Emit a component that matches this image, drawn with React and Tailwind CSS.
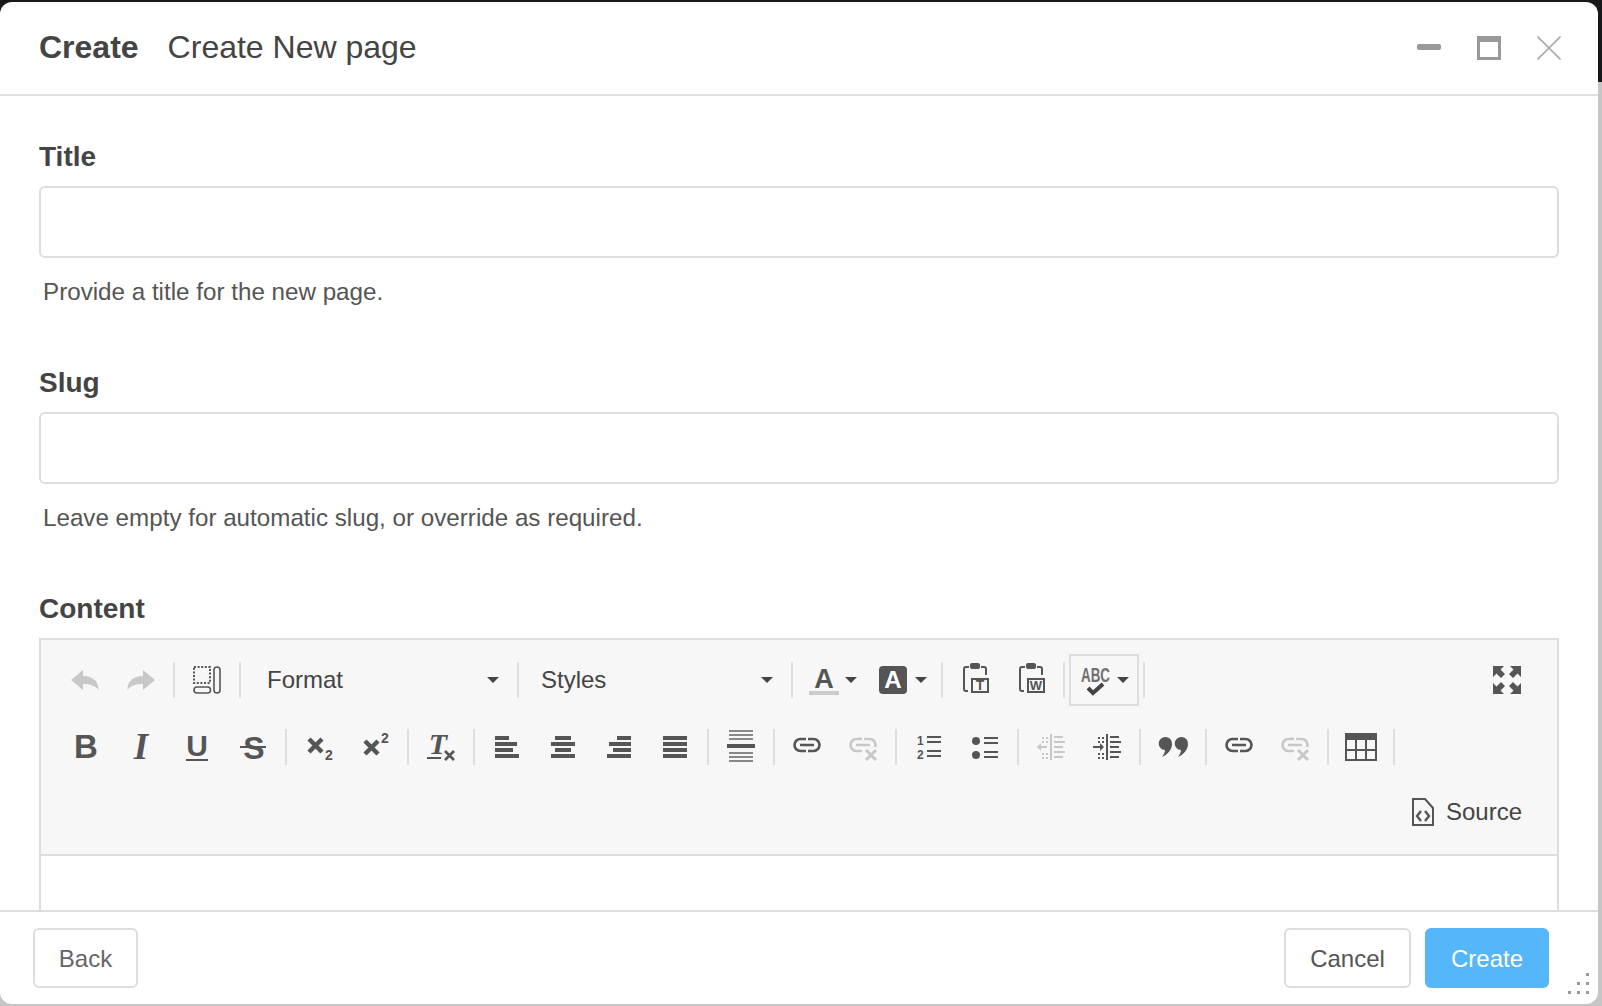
import React from "react";

const DARK = "#555555";
const LIGHT = "#c8c8c8";
const BAR_BG = "#f7f7f7";

function Caret() {
  return (
    <svg width="12" height="6" viewBox="0 0 12 6" className="shrink-0">
      <path d="M0 0H12L6 6Z" fill="#444444" />
    </svg>
  );
}

function Icon({ w = 28, h = 28, children }) {
  return (
    <svg width={w} height={h} viewBox={`0 0 ${w} ${h}`} className="block shrink-0 overflow-visible">
      {children}
    </svg>
  );
}

// toolbar pieces
function Btn({ children }) {
  return <span className="w-[56px] h-[52px] flex items-center justify-center shrink-0">{children}</span>;
}

function Sep() {
  return <span className="w-[2px] h-[36px] bg-[#dedede] mx-[4px] shrink-0" />;
}

function Combo({ label, width, pad }) {
  return (
    <span className={`${width} ${pad} h-[52px] pr-[14px] flex items-center justify-between shrink-0 text-[24px] text-[#444444]`}>
      {label}
      <Caret />
    </span>
  );
}

const Undo = ({ flip }) => (
  <Icon>
    <g transform={flip ? "translate(28 0) scale(-1 1)" : undefined}>
      <path d="M0 14L12 4V10C22 10 28 16 27.5 24C24 19 18 18 12 18V24Z" fill={LIGHT} />
    </g>
  </Icon>
);

const ShowBlocks = () => (
  <Icon>
    <rect x="1" y="1" width="16" height="16" fill="none" stroke={DARK} strokeWidth="2" strokeDasharray="2 1.6" />
    <rect x="1" y="21" width="16.5" height="6" rx="3" fill="none" stroke={DARK} strokeWidth="1.6" />
    <rect x="21" y="1" width="6" height="26" rx="3" fill="none" stroke={DARK} strokeWidth="1.6" />
  </Icon>
);

const FontColor = () => (
  <Icon w={30} h={30}>
    <text x="15" y="23" textAnchor="middle" fontSize="27" fontWeight="700" fill={DARK}>A</text>
    <rect x="0" y="26" width="30" height="4" fill="#cccccc" />
  </Icon>
);

const BgColor = () => (
  <Icon>
    <rect width="28" height="28" rx="4" fill={DARK} />
    <text x="14" y="22" textAnchor="middle" fontSize="24" fontWeight="700" fill="#ffffff">A</text>
  </Icon>
);

const Clip = ({ letter, size = 14 }) => (
  <span className="translate-x-px -translate-y-[2px]">
    <Icon w={26} h={30}>
      <path d="M6 4H3Q1 4 1 6V26Q1 28 3 28H5M18 4H21Q23 4 23 6V12" fill="none" stroke={DARK} strokeWidth="2" />
      <rect x="7" y="0" width="10" height="6" rx="2" fill={DARK} />
      <rect x="9" y="16" width="16" height="13" fill={BAR_BG} stroke={DARK} strokeWidth="2" />
      <text x="17" y="27" textAnchor="middle" fontSize={size} fontWeight="700" fill={DARK}>{letter}</text>
    </Icon>
  </span>
);

const Abc = () => (
  <Icon w={29} h={30}>
    <text x="0" y="17" fontSize="20" fontWeight="700" textLength="29" lengthAdjust="spacingAndGlyphs" fill="#707070">ABC</text>
    <path d="M7 23L12 28L22 19" fill="none" stroke="#444444" strokeWidth="4" />
  </Icon>
);

const Maximize = () => {
  const pts = "0,0 11,0 7.5,3.5 12,8 8,12 3.5,7.5 0,11";
  return (
    <Icon>
      <polygon points={pts} fill={DARK} />
      <polygon points={pts} fill={DARK} transform="translate(28 0) scale(-1 1)" />
      <polygon points={pts} fill={DARK} transform="translate(0 28) scale(1 -1)" />
      <polygon points={pts} fill={DARK} transform="translate(28 28) scale(-1 -1)" />
    </Icon>
  );
};

const Bold = () => (
  <Icon>
    <text x="15" y="25" textAnchor="middle" fontSize="33" fontWeight="700" fill={DARK}>B</text>
  </Icon>
);

const Italic = () => (
  <Icon>
    <text x="14" y="26" textAnchor="middle" fontSize="37" fontWeight="700" fontStyle="italic" fontFamily="Liberation Serif" fill={DARK}>I</text>
  </Icon>
);

const Underline = () => (
  <Icon>
    <text x="14" y="23" textAnchor="middle" fontSize="30" fontWeight="700" fill={DARK}>U</text>
    <rect x="3" y="26" width="22" height="2" fill={DARK} />
  </Icon>
);

const Strike = () => (
  <Icon>
    <text x="15" y="26" textAnchor="middle" fontSize="32" fontWeight="700" fill={DARK}>S</text>
    <rect x="1" y="13" width="26" height="2" fill={DARK} />
  </Icon>
);

const Cross = ({ x = 0, y = 0, s = 18, sw = 5, color = DARK }) => (
  <path d={`M${x} ${y}L${x + s} ${y + s}M${x + s} ${y}L${x} ${y + s}`} stroke={color} strokeWidth={sw} fill="none" />
);

const Sub = () => (
  <Icon>
    <Cross x={4} y={6} s={13} sw={4.5} />
    <text x="20" y="27" fontSize="14" fontWeight="700" fill={DARK}>2</text>
  </Icon>
);

const Sup = () => (
  <Icon>
    <Cross x={4} y={8} s={13} sw={4.5} />
    <text x="20" y="10" fontSize="14" fontWeight="700" fill={DARK}>2</text>
  </Icon>
);

const RemoveFormat = () => (
  <Icon>
    <text x="11" y="21" textAnchor="middle" fontSize="30" fontWeight="700" fontStyle="italic" fontFamily="Liberation Serif" fill={DARK}>T</text>
    <rect x="0" y="24" width="14" height="2" fill={DARK} />
    <Cross x={18} y={18} s={9} sw={2.6} />
  </Icon>
);

const Bars = ({ rows }) => (
  <Icon w={24} h={24}>
    {rows.map(([x, w], i) => (
      <rect key={i} x={x} y={1 + i * 6} width={w} height="4" fill={DARK} />
    ))}
  </Icon>
);

const HorizontalRule = () => (
  <span className="-translate-y-px">
    <Icon w={28} h={32}>
      {[0, 4, 8, 22, 26, 30].map((y) => (
        <rect key={y} x="2" y={y} width="24" height="2" fill="#888888" />
      ))}
      <rect x="0" y="14" width="28" height="4" fill={DARK} />
    </Icon>
  </span>
);

const LinkIcon = ({ off }) => {
  const color = off ? LIGHT : DARK;
  return (
    <Icon>
      <path d="M13 6H7.5a6 6 0 0 0 0 12H13M15 6H20.5a6 6 0 0 1 0 12H15M7 12H21" fill="none" stroke={color} strokeWidth="2.6" />
      {off && <rect x="14" y="14" width="14" height="14" fill={BAR_BG} />}
      {off && <Cross x={17} y={17} s={10} sw={3} color={color} />}
    </Icon>
  );
};

const NumList = () => (
  <Icon w={24} h={26}>
    <text x="0" y="11" fontSize="12" fontWeight="700" fill={DARK}>1</text>
    <text x="0" y="25" fontSize="12" fontWeight="700" fill={DARK}>2</text>
    {[2, 7, 16, 21].map((y) => (
      <rect key={y} x="10" y={y} width="14" height="2" fill={DARK} />
    ))}
  </Icon>
);

const BulList = () => (
  <Icon w={26} h={26}>
    <circle cx="4" cy="7" r="4" fill={DARK} />
    <circle cx="4" cy="21" r="4" fill={DARK} />
    {[3, 8, 17, 22].map((y) => (
      <rect key={y} x="12" y={y} width="14" height="2" fill={DARK} />
    ))}
  </Icon>
);

const IndentIcon = ({ out }) => {
  const color = out ? LIGHT : DARK;
  return (
    <Icon>
      <rect x="13" y="1" width="2" height="26" fill={color} />
      {[4, 9, 14, 19, 24].map((y) => (
        <rect key={y} x="17" y={y - 1} width={y % 2 ? 11 : 9} height="2" fill={color} />
      ))}
      {out ? (
        <path d="M0 14L4 10V13H10V15H4V18Z" fill={color} />
      ) : (
        <path d="M11 14L7 10V13H0V15H7V18Z" fill={color} />
      )}
      {[4, 8, 20, 24].map((y) => (
        <g key={y}>
          <rect x="5" y={y} width="2" height="2" fill={color} />
          <rect x="9" y={y} width="2" height="2" fill={color} />
        </g>
      ))}
    </Icon>
  );
};

const Quote = () => {
  const d = "M6.5 0a6.5 6.5 0 0 1 6.5 7c0 6-5 11-10 13c2-3 3-5 3-7a6.5 6.5 0 0 1 .5-13z";
  return (
    <Icon w={28} h={20}>
      <path d={d} fill={DARK} />
      <path d={d} fill={DARK} transform="translate(16 0)" />
    </Icon>
  );
};

const TableIcon = () => (
  <Icon w={32} h={28}>
    <rect x="1" y="1" width="30" height="26" fill="none" stroke={DARK} strokeWidth="2" />
    <rect x="0" y="0" width="32" height="7" fill={DARK} />
    <path d="M11 7V27M21 7V27M1 17H31" stroke={DARK} strokeWidth="2" fill="none" />
  </Icon>
);

const SourceIcon = () => (
  <Icon w={22} h={28}>
    <path d="M1 1H13L21 10V27H1Z" fill="none" stroke={DARK} strokeWidth="2" />
    <path d="M9 13L5 18L9 23M13 13L17 18L13 23" fill="none" stroke={DARK} strokeWidth="2.4" />
  </Icon>
);

function Field({ label, help }) {
  return (
    <div className="mb-[56px]">
      <div className="h-[34px] leading-[34px] text-[28px] font-bold text-[#444444] mb-[12px]">{label}</div>
      <input className="block w-full h-[72px] border-2 border-[#dddddd] rounded-[6px] bg-white outline-none" />
      <div className="mt-[16px] pl-[4px] h-[36px] leading-[36px] text-[24.2px] text-[#555555]">{help}</div>
    </div>
  );
}

function FooterButton({ children, className }) {
  return (
    <button className={`h-[60px] pt-[2px] rounded-[6px] text-[24px] flex items-center justify-center ${className}`}>
      {children}
    </button>
  );
}

export default function App() {
  return (
    <div className="w-[1602px] h-[1006px] overflow-hidden pt-[2px] pr-[4px] pb-[2px] bg-[linear-gradient(#17181a_82px,#c6c6c6_82px)] font-['Liberation_Sans',Arial,sans-serif]">
      <div className="relative w-full h-full bg-white rounded-[12px] flex flex-col overflow-hidden">
        {/* header */}
        <div className="h-[94px] shrink-0 border-b-2 border-[#e0e0e0] flex items-center pl-[39px] pr-[37px] text-[32px] text-[#444444]">
          <span className="font-bold mb-[2px]">Create</span>
          <span className="ml-[29px] mb-[2px]">Create New page</span>
          <div className="ml-auto flex items-center gap-[36px]">
            <span className="w-[24px] h-[6px] rounded-[2px] bg-[#999999] mb-[2px]" />
            <span className="w-[24px] h-[24px] border-[3px] border-t-[6px] border-[#999999]" />
            <svg width="24" height="24" viewBox="0 0 24 24" className="block">
              <path d="M0.5 0.5L23.5 23.5M23.5 0.5L0.5 23.5" stroke="#aaaaaa" strokeWidth="1.6" fill="none" />
            </svg>
          </div>
        </div>

        {/* form */}
        <div className="flex-1 min-h-0 overflow-hidden px-[39px] pt-[44px]">
          <Field label="Title" help="Provide a title for the new page." />
          <Field label="Slug" help="Leave empty for automatic slug, or override as required." />
          <div className="h-[34px] leading-[34px] text-[28px] font-bold text-[#444444] mb-[12px]">Content</div>
          <div className="border-2 border-[#dddddd] h-[400px] bg-white">
            <div className="h-[216px] bg-[#f7f7f7] border-b-2 border-[#dddddd] pl-[16px] pr-[22px] pt-[14px]">
              <div className="flex items-center h-[52px]">
                <Btn><Undo /></Btn>
                <Btn><Undo flip /></Btn>
                <Sep />
                <Btn><ShowBlocks /></Btn>
                <Sep />
                <Combo label="Format" width="w-[268px]" pad="pl-[22px]" />
                <Sep />
                <Combo label="Styles" width="w-[264px]" pad="pl-[18px]" />
                <Sep />
                <span className="w-[69px] h-[52px] pl-[12px] flex items-center gap-[6px] shrink-0">
                  <FontColor />
                  <Caret />
                </span>
                <span className="w-[71px] h-[52px] pl-[13px] flex items-center gap-[8px] shrink-0">
                  <BgColor />
                  <Caret />
                </span>
                <Sep />
                <Btn><Clip letter="T" /></Btn>
                <Btn><Clip letter="W" size={13} /></Btn>
                <Sep />
                <span className="w-[70px] h-[52px] pl-[10px] border-2 border-[#dddddd] flex items-center gap-[7px] shrink-0">
                  <Abc />
                  <Caret />
                </span>
                <Sep />
                <span className="ml-auto">
                  <Btn><Maximize /></Btn>
                </span>
              </div>
              <div className="flex items-center h-[52px] mt-[15px]">
                <Btn><Bold /></Btn>
                <Btn><Italic /></Btn>
                <Btn><Underline /></Btn>
                <Btn><Strike /></Btn>
                <Sep />
                <Btn><Sub /></Btn>
                <Btn><Sup /></Btn>
                <Sep />
                <Btn><RemoveFormat /></Btn>
                <Sep />
                <Btn><Bars rows={[[0, 14], [0, 22], [0, 18], [0, 24]]} /></Btn>
                <Btn><Bars rows={[[4, 16], [0, 24], [4, 16], [0, 24]]} /></Btn>
                <Btn><Bars rows={[[10, 14], [2, 22], [6, 18], [0, 24]]} /></Btn>
                <Btn><Bars rows={[[0, 24], [0, 24], [0, 24], [0, 24]]} /></Btn>
                <Sep />
                <Btn><HorizontalRule /></Btn>
                <Sep />
                <Btn><LinkIcon /></Btn>
                <Btn><LinkIcon off /></Btn>
                <Sep />
                <Btn><NumList /></Btn>
                <Btn><BulList /></Btn>
                <Sep />
                <Btn><IndentIcon out /></Btn>
                <Btn><IndentIcon /></Btn>
                <Sep />
                <Btn><Quote /></Btn>
                <Sep />
                <Btn><LinkIcon /></Btn>
                <Btn><LinkIcon off /></Btn>
                <Sep />
                <Btn><TableIcon /></Btn>
                <Sep />
              </div>
              <div className="flex items-center justify-end gap-[12px] h-[52px] mt-[13px] mr-[13px] text-[24px] text-[#444444]">
                <SourceIcon />
                <span>Source</span>
              </div>
            </div>
          </div>
        </div>

        {/* footer */}
        <div className="h-[94px] shrink-0 border-t-2 border-[#dddddd] flex items-start pt-[16px] pl-[33px] pr-[49px]">
          <FooterButton className="w-[105px] border-2 border-[#dddddd] text-[#666666]">Back</FooterButton>
          <FooterButton className="ml-auto w-[127px] border-2 border-[#dddddd] text-[#555555]">Cancel</FooterButton>
          <FooterButton className="ml-[14px] w-[124px] bg-[#55b6f9] text-white">Create</FooterButton>
        </div>

        {/* resize grip */}
        <svg width="22" height="22" viewBox="0 0 22 22" className="absolute right-[8px] bottom-[9px]">
          {[[18, 0], [18, 9], [9, 9], [18, 18], [9, 18], [0, 18]].map(([x, y]) => (
            <rect key={`${x}-${y}`} x={x} y={y} width="3" height="3" fill="#9a9a9a" />
          ))}
        </svg>
      </div>
    </div>
  );
}
